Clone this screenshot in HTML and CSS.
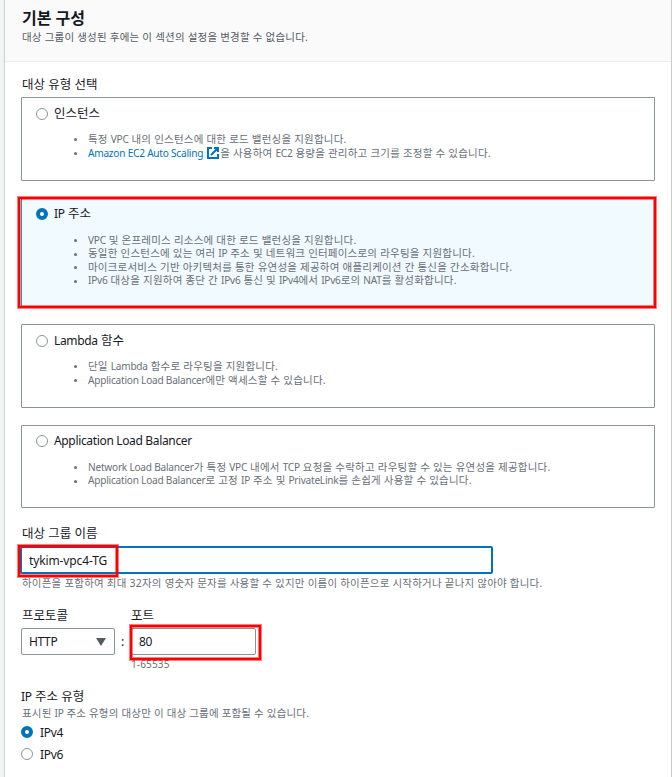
FILE: index.html
```html
<!DOCTYPE html>
<html lang="ko">
<head>
<meta charset="utf-8">
<title>기본 구성</title>
<link rel="stylesheet" href="styles.css">
</head>
<body>
<main class="panel">
  <header class="panel-header">
    <h1>기본 구성</h1>
    <p class="hint">대상 그룹이 생성된 후에는 이 섹션의 설정을 변경할 수 없습니다.</p>
  </header>
  <section class="content">
    <div class="label">대상 유형 선택</div>
    <div class="tiles">
      <article class="tile">
        <div class="tile-head"><i class="radio"></i><span>인스턴스</span></div>
        <ul>
          <li>특정 <b>VPC</b> 내의 인스턴스에 대한 로드 밸런싱을 지원합니다.</li>
          <li><a><b>Amazon EC2 Auto Scaling</b></a><svg class="external" viewBox="0 0 12 12"><path d="M5 1H1v10h10V7M7 1h4v4M11 1L4 8" fill="none" stroke="currentColor" stroke-width="2"/></svg>을 사용하여 <b>EC2</b> 용량을 관리하고 크기를 조정할 수 있습니다.</li>
        </ul>
      </article>
      <article class="tile selected">
        <div class="tile-head"><i class="radio on"></i><span><b>IP</b> 주소</span></div>
        <ul>
          <li><b>VPC</b> 및 온프레미스 리소스에 대한 로드 밸런싱을 지원합니다.</li>
          <li>동일한 인스턴스에 있는 여러 <b>IP</b> 주소 및 네트워크 인터페이스로의 라우팅을 지원합니다.</li>
          <li>마이크로서비스 기반 아키텍처를 통한 유연성을 제공하여 애플리케이션 간 통신을 간소화합니다.</li>
          <li><b>IPv6</b> 대상을 지원하여 종단 간 <b>IPv6</b> 통신 및 <b>IPv4</b>에서 <b>IPv6</b>로의 <b>NAT</b>를 활성화합니다.</li>
        </ul>
        <div class="mark mark-tile"></div>
      </article>
      <article class="tile">
        <div class="tile-head"><i class="radio"></i><span><b>Lambda</b> 함수</span></div>
        <ul>
          <li>단일 <b>Lambda</b> 함수로 라우팅을 지원합니다.</li>
          <li><b>Application Load Balancer</b>에만 액세스할 수 있습니다.</li>
        </ul>
      </article>
      <article class="tile last">
        <div class="tile-head"><i class="radio"></i><span><b>Application Load Balancer</b></span></div>
        <ul>
          <li><b>Network Load Balancer</b>가 특정 <b>VPC</b> 내에서 <b>TCP</b> 요청을 수락하고 라우팅할 수 있는 유연성을 제공합니다.</li>
          <li><b>Application Load Balancer</b>로 고정 <b>IP</b> 주소 및 <b>PrivateLink</b>를 손쉽게 사용할 수 있습니다.</li>
        </ul>
      </article>
    </div>

    <div class="field name-field">
      <div class="label">대상 그룹 이름</div>
      <div class="input focus"><b>tykim-vpc4-TG</b><div class="mark mark-name"></div></div>
      <p class="hint">하이픈을 포함하여 최대 32자의 영숫자 문자를 사용할 수 있지만 이름이 하이픈으로 시작하거나 끝나지 않아야 합니다.</p>
    </div>

    <div class="endpoint">
      <div class="field protocol">
        <div class="label">프로토콜</div>
        <div class="input select"><b>HTTP</b><svg class="caret" viewBox="0 0 10 8"><path d="M0 0h10L5 8z" fill="#545b64"/></svg></div>
      </div>
      <span class="colon">:</span>
      <div class="field port">
        <div class="label">포트</div>
        <div class="input"><b>80</b><div class="mark mark-port"></div></div>
        <p class="hint"><b>1-65535</b></p>
      </div>
    </div>

    <div class="field ip-type">
      <div class="label"><b>IP</b> 주소 유형</div>
      <p class="hint">표시된 <b>IP</b> 주소 유형의 대상만 이 대상 그룹에 포함될 수 있습니다.</p>
      <div class="option"><i class="radio on"></i><b>IPv4</b></div>
      <div class="option"><i class="radio"></i><b>IPv6</b></div>
    </div>
  </section>
</main>
</body>
</html>
```

FILE: styles.css
```css
* { box-sizing: border-box; }

body {
  margin: 0;
  height: 777px;
  overflow: hidden;
  background: #f2f3f3;
  color: #16191f;
  font-family: "Noto Sans", "Noto Sans CJK KR", sans-serif;
  font-size: 12.5px;
  white-space: nowrap;
}

h1, p, ul { margin: 0; padding: 0; }

/* Latin runs inside Korean text */
b { font-weight: 400; font-size: 0.96em; letter-spacing: -0.34px; }

.panel {
  height: 777px;
  margin-left: 4px;
  background: #fff;
  border-left: 1px solid #ccd1d1;
  border-right: 1px solid #ccc;
}

.panel-header {
  height: 62px;
  padding: 8px 17px 0;
  background: #fafafa;
  border-bottom: 1px solid #eaeded;
}

h1 { font-size: 16px; line-height: 20px; }

.hint, li {
  color: #687078;
  font-size: 10.5px;
  letter-spacing: 0.21px;
}
.hint b, li b { letter-spacing: -0.22px; }

.hint { height: 16px; line-height: 16px; }
.panel-header .hint { margin-top: 1px; color: #545b64; }

.content { padding: 14px 16px 0; }

.label { height: 18px; line-height: 18px; padding-left: 1px; }

.tiles { display: flex; flex-direction: column; gap: 17px; margin-top: 3px; }

.tile {
  position: relative;
  height: 84px;
  padding: 8px 14px 0;
  border: 1px solid #879596;
  border-radius: 1px;
}
.tile.selected {
  height: 109px;
  padding-top: 7px;
  background: #f1faff;
  border-color: #00a1c9;
}
.tile.last { height: 83px; padding-top: 7px; }

.tile-head {
  display: flex;
  align-items: center;
  gap: 6px;
  height: 16px;
  line-height: 16px;
}

.radio {
  flex: none;
  width: 12px;
  height: 12px;
  border: 1px solid #879596;
  border-radius: 50%;
  background: #fff;
}
.radio.on { border: 4px solid #0073bb; }

ul { margin-top: 10px; padding-left: 52px; list-style: none; }
.tile.selected ul { margin-top: 11px; }
.tile.last ul { margin-top: 11px; }

li {
  position: relative;
  display: flex;
  align-items: center;
  height: 14px;
  line-height: 14px;
  white-space: pre;
}
.selected li { height: 13.5px; }
.last li { height: 13.5px; }
li::before {
  content: "";
  position: absolute;
  left: -14px;
  top: 6px;
  width: 3px;
  height: 3px;
  border-radius: 50%;
  background: #687078;
}

a { color: #0073bb; }
.external { width: 12px; height: 12px; margin: 0 1px 0 4px; color: #0073bb; }

.name-field { margin-top: 17px; }

.input {
  position: relative;
  display: flex;
  align-items: center;
  height: 27px;
  padding: 0 7px;
  border: 1px solid #879596;
  border-radius: 2px;
  background: #fff;
}
.input.focus {
  width: 473px;
  height: 28px;
  margin: 3px 0 0 -1px;
  border: 2px solid #0073bb;
}
.input.focus b { letter-spacing: -0.12px; }
.name-field .hint { margin-top: 1px; padding-left: 1px; }

.endpoint { display: flex; margin-top: 16px; }
.endpoint .label { margin-bottom: 3px; }
.protocol { width: 94px; }
.select { justify-content: space-between; padding-right: 8px; }
.caret { width: 10px; height: 8px; }
.colon { width: 16px; padding: 26px 0 0 6px; line-height: 18px; }
.port { width: 125px; }
.port .label { padding-left: 0; }
.port .hint { margin-top: 1px; }
.port .hint b { letter-spacing: 0.1px; }

.ip-type { margin-top: 16px; }
.ip-type .label { padding-left: 0; }
.ip-type .hint { margin-top: -1px; padding-left: 1px; letter-spacing: 0.18px; }
.option {
  display: flex;
  align-items: center;
  gap: 7px;
  height: 22px;
}

/* Red callout frames */
.mark {
  position: absolute;
  z-index: 1;
  border: 2px solid #f00;
  outline: 1px solid rgba(255, 0, 0, 0.5);
  box-shadow: inset 0 0 0 1px rgba(255, 0, 0, 0.5);
}
.mark-tile { left: -4px; top: -2px; width: 638px; height: 111px; }
.mark-name { left: -4px; top: -3px; width: 100px; height: 32px; }
.mark-port { left: -2px; top: -4px; width: 131px; height: 35px; }
```
